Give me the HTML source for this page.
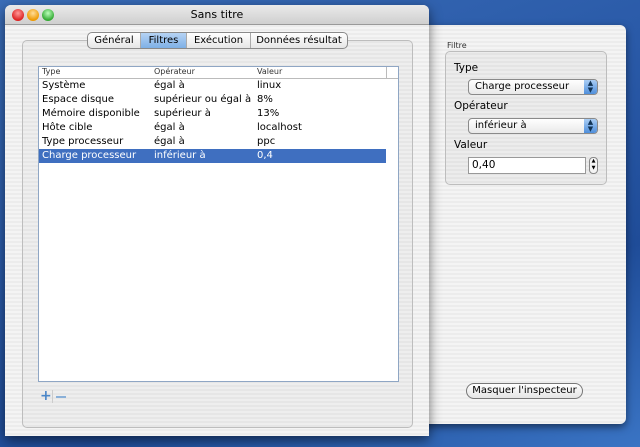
<!DOCTYPE html>
<html><head><meta charset="utf-8"><style>
*{margin:0;padding:0;box-sizing:border-box}
body{width:640px;height:447px;overflow:hidden;position:relative;font-family:"DejaVu Sans","Liberation Sans",sans-serif;font-size:10px;color:#000;
background:linear-gradient(160deg,#3a6db8 0%,#2a5aa8 40%,#1f4c98 70%,#3a74c4 100%)}
.abs{position:absolute}
.stripe{background:repeating-linear-gradient(#ececec 0 2px,#f4f4f4 2px 4px)}
#insp{left:420px;top:25px;width:206px;height:399px;border-radius:6px;box-shadow:0 3px 8px rgba(0,0,0,.5)}
#main{left:5px;top:5px;width:424px;height:431px;border-radius:6px 6px 0 0;box-shadow:0 4px 12px rgba(0,0,0,.55);overflow:hidden}
.title{left:0;top:0;width:424px;height:20px;background:linear-gradient(#eaeaea,#cfcfcf);border-bottom:1px solid #999;text-align:center;font-size:11px;line-height:20px}
.light{width:12px;height:12px;border-radius:50%;top:4px}
.tabbox{left:17px;top:35px;width:391px;height:388px;border:1px solid #bdbdbd;border-radius:5px;background:rgba(0,0,0,.025)}
.tabs{left:82px;top:27px;width:261px;height:17px;border:1px solid #8a8a8a;border-radius:5px;background:linear-gradient(#fff,#e6e6e6);display:flex;font-size:10px;line-height:15px;overflow:hidden}
.tabs div{border-right:1px solid #aaa;white-space:nowrap;text-align:center;flex:none}
.tabs div:last-child{border-right:none}
.tabs .sel{background:linear-gradient(#b6d3f4,#7eb0e6)}
.table{left:33px;top:61px;width:361px;height:316px;background:#fff;border:1px solid #8fa6c4}
.hdr{height:12px;border-bottom:1px solid #bbb;font-size:8px;color:#333;position:relative}
.row{height:14px;font-size:10px;line-height:14px;position:relative}
.c1,.c2,.c3{position:absolute;top:0;white-space:nowrap}
.c1{left:3px}.c2{left:115px}.c3{left:218px}
.seltr{background:#3f6fc0;color:#fff}
.popup{height:16px;border:1px solid #8a8a8a;border-radius:4px;background:linear-gradient(#fff,#e9e9e9);font-size:10px;line-height:14px;padding-left:6px}
.popup .arr{position:absolute;right:0;top:0;width:13px;height:14px;background:linear-gradient(#a9cdf4,#4f8fdc);border-radius:0 3px 3px 0;color:#135;font-size:7px;line-height:7px;text-align:center}
</style></head><body>
<div id="insp" class="abs stripe">
  <div class="abs" style="left:27px;top:16px;font-size:8px;color:#333">Filtre</div>
  <div class="abs" style="left:25px;top:26px;width:162px;height:134px;border:1px solid #bdbdbd;border-radius:5px;background:rgba(0,0,0,.03)"></div>
  <div class="abs" style="left:34px;top:37px;font-size:10.5px">Type</div>
  <div class="abs popup" style="left:48px;top:54px;width:130px">Charge processeur<div class="arr">▲<br>▼</div></div>
  <div class="abs" style="left:34px;top:75px;font-size:10.5px">Opérateur</div>
  <div class="abs popup" style="left:48px;top:93px;width:130px">inférieur à<div class="arr">▲<br>▼</div></div>
  <div class="abs" style="left:34px;top:114px;font-size:10.5px">Valeur</div>
  <div class="abs" style="left:48px;top:132px;width:118px;height:17px;background:#fff;border:1px solid #999;font-size:10.5px;line-height:15px;padding-left:3px">0,40</div>
  <div class="abs" style="left:169px;top:132px;width:9px;height:17px;border:1px solid #888;border-radius:4px;background:#f4f4f4;font-size:5px;line-height:7px;text-align:center">▲<br>▼</div>
  <div class="abs" style="left:46px;top:358px;width:117px;height:16px;border:1px solid #777;border-radius:8px;background:linear-gradient(#fff,#e4e4e4);font-size:10px;line-height:14px;text-align:center">Masquer l'inspecteur</div>
</div>
<div id="main" class="abs stripe">
  <div class="abs title">Sans titre</div>
  <div class="abs light" style="left:7px;background:radial-gradient(circle at 50% 35%,#f99,#d22 70%)"></div>
  <div class="abs light" style="left:22px;background:radial-gradient(circle at 50% 35%,#fd9,#e90 70%)"></div>
  <div class="abs light" style="left:37px;background:radial-gradient(circle at 50% 35%,#bfb,#3a3 70%)"></div>
  <div class="abs tabbox"></div>
  <div class="abs tabs"><div style="width:53px">Général</div><div class="sel" style="width:46px">Filtres</div><div style="width:64px">Exécution</div><div style="width:96px">Données résultat</div></div>
  <div class="abs table">
    <div class="hdr"><span class="c1">Type</span><span class="c2">Opérateur</span><span class="c3">Valeur</span><span class="abs" style="left:347px;top:0;width:1px;height:12px;background:#bbb"></span></div>
    <div class="row"><span class="c1">Système</span><span class="c2">égal à</span><span class="c3">linux</span></div>
    <div class="row"><span class="c1">Espace disque</span><span class="c2">supérieur ou égal à</span><span class="c3">8%</span></div>
    <div class="row"><span class="c1">Mémoire disponible</span><span class="c2">supérieur à</span><span class="c3">13%</span></div>
    <div class="row"><span class="c1">Hôte cible</span><span class="c2">égal à</span><span class="c3">localhost</span></div>
    <div class="row"><span class="c1">Type processeur</span><span class="c2">égal à</span><span class="c3">ppc</span></div>
    <div class="row seltr" style="width:347px"><span class="c1">Charge processeur</span><span class="c2">inférieur à</span><span class="c3">0,4</span></div>
  </div>
  <div class="abs" style="left:35px;top:385px;font-size:14px;line-height:12px;color:#4a86c8;font-weight:bold">+</div>
  <div class="abs" style="left:47px;top:385px;width:1px;height:13px;background:#ccc"></div>
  <div class="abs" style="left:51px;top:391px;width:10px;height:2px;background:#8ab0d8"></div>
</div>
</body></html>
